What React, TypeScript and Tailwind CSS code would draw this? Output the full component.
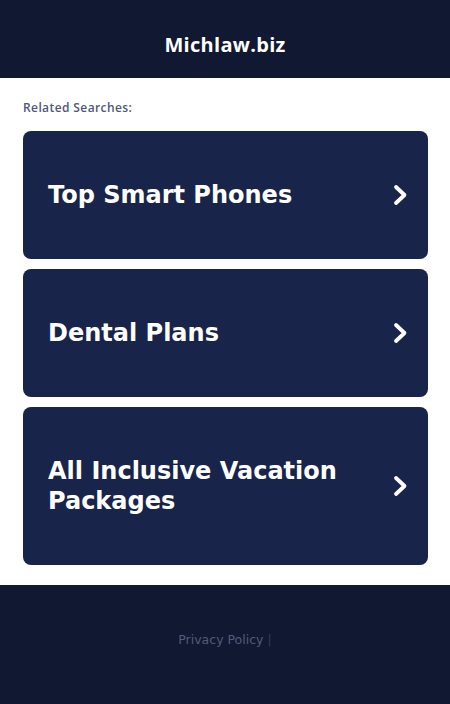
import React from "react";

const items = ["Top Smart Phones", "Dental Plans", "All Inclusive Vacation Packages"];

function Chevron() {
  return (
    <svg width="18" height="22" viewBox="0 0 18 22" className="shrink-0">
      <path d="M5 3 L13.5 11 L5 19" fill="none" stroke="white" strokeWidth="3.8" strokeLinecap="round" strokeLinejoin="round" />
    </svg>
  );
}

export default function App() {
  return (
    <div className="w-[450px] min-h-[704px] flex flex-col bg-white" style={{ fontFamily: '"DejaVu Sans", sans-serif' }}>
      <header className="h-[78px] bg-[#111831] flex items-center justify-center pt-[11px]">
        <h1 className="text-white text-[20px] font-bold tracking-[0.3px]" style={{ fontFamily: '"Open Sans", "Noto Sans", sans-serif' }}>
          Michlaw.biz
        </h1>
      </header>
      <main className="pl-[23px] pr-[22px] pt-[22px] pb-[20px] flex flex-col">
        <div className="text-[12px] leading-[16px] text-[#4f5878] font-semibold mb-[15px] tracking-[0.4px]" style={{ fontFamily: '"Open Sans", "Noto Sans", sans-serif' }}>
          Related Searches:
        </div>
        <div className="flex flex-col gap-[10px]">
          {items.map((t) => (
            <div key={t} className="bg-[#19244b] rounded-[8px] pl-[25px] pr-[19px] py-[49px] flex items-center justify-between gap-4">
              <span className="text-white font-bold text-[24px] leading-[30px]">{t}</span>
              <Chevron />
            </div>
          ))}
        </div>
      </main>
      <footer className="flex-1 bg-[#111831] min-h-[119px] flex items-center justify-center pb-[8px]">
        <div className="text-[12.5px] text-[#535b7a]">
          Privacy Policy <span className="text-[#353c58]">|</span>
        </div>
      </footer>
    </div>
  );
}
